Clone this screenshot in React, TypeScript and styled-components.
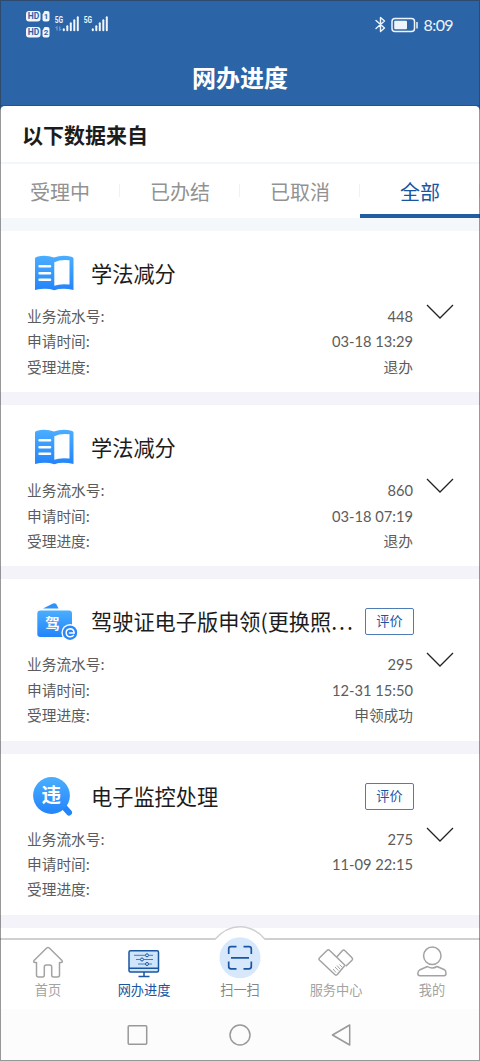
import React from 'react';
import styled, { createGlobalStyle } from 'styled-components';

const cjk = `'Noto Sans CJK SC', sans-serif`;
const blue = '#1a559f';
const grey = '#a3a3a3';

const Global = createGlobalStyle`
  * { box-sizing: border-box; }
  body { margin: 0; font-family: ${cjk}; }
  svg { display: block; }
`;

const Screen = styled.div`
  position: relative;
  display: flex;
  flex-direction: column;
  width: 480px;
  height: 1061px;
  overflow: hidden;
  background: #2b65a8;
  &::after {
    content: '';
    position: absolute;
    inset: 0;
    border: 1px solid rgba(50, 50, 50, 0.5);
    pointer-events: none;
    z-index: 5;
  }
`;

const StatusBar = styled.div`
  display: flex;
  justify-content: space-between;
  height: 48px;
  padding: 8px 27px 0 26px;
`;

const StatusRight = styled.div`
  display: flex;
  align-items: center;
  height: 33px;
  gap: 5px;
  color: #eef4fb;
  font: 400 16px/33px Lato, ${cjk};
  letter-spacing: -0.6px;
`;

const Title = styled.h1`
  margin: 0;
  height: 58px;
  padding-top: 11px;
  border-bottom: 1px solid #1d549b;
  color: #fff;
  font-size: 24px;
  font-weight: 700;
  line-height: 36px;
  text-align: center;
`;

const Source = styled.div`
  height: 58px;
  flex: none;
  padding-left: 22px;
  border-radius: 5px 5px 0 0;
  border-bottom: 2px solid #f2f7f9;
  background: #fff;
  color: #1c1c1c;
  font-size: 21px;
  font-weight: 700;
  line-height: 57px;
`;

const Tabs = styled.div`
  display: grid;
  grid-template-columns: repeat(4, 120px);
  height: 54px;
  flex: none;
  background: #fff;
`;

const Tab = styled.div<{ $active?: boolean }>`
  display: flex;
  align-items: center;
  justify-content: center;
  height: 54px;
  padding-top: 4px;
  font-size: 20px;
  color: ${p => (p.$active ? blue : '#929292')};
  border-bottom: 4px solid ${p => (p.$active ? '#225ca3' : 'transparent')};
  background: linear-gradient(#f1f1f3, #f1f1f3) right 20px / 1px 13px no-repeat;
`;

const List = styled.main`
  flex: 1;
  min-height: 0;
  overflow: hidden;
  display: flex;
  flex-direction: column;
  gap: 13px;
  padding-top: 13px;
  background: linear-gradient(#f4f8fb 13px, #f3f3f9 13px);
`;

const Card = styled.section`
  display: grid;
  grid-template-columns: 386px 1fr;
  flex: none;
  height: 161.2px;
  padding: 19px 26px 0 27px;
  background: #fff;
`;

const CardHead = styled.div`
  display: flex;
  align-items: center;
  height: 46px;
`;

const IconSlot = styled.div`
  width: 64px;
  flex: none;
`;

const CardTitle = styled.h2`
  flex: 1;
  margin: 0;
  white-space: nowrap;
  color: #1c1c1c;
  font-size: 21.2px;
  font-weight: 400;
  line-height: 32px;
`;

const Dots = styled.span`
  letter-spacing: 2px;
`;

const RateButton = styled.button`
  width: 49px;
  height: 27px;
  margin: 1px -1px 0 0;
  padding: 0 0 1px;
  border: 1px solid #4d7db6;
  border-radius: 2px;
  background: #fff;
  color: ${blue};
  font: 400 13.2px/24px ${cjk};
`;

const Row = styled.div`
  display: flex;
  justify-content: space-between;
  height: 25.4px;
  color: #5c5c5c;
  font-size: 14.7px;
  line-height: 25.4px;
`;

const Rows = styled.div`
  margin-top: 7px;
`;

const Value = styled.span`
  padding-top: 1px;
  font-family: Lato, ${cjk};
`;

const Expand = styled.div`
  padding: 54px 0 0 13px;
`;

const NavBar = styled.nav`
  position: relative;
  display: grid;
  grid-template-columns: repeat(5, 96px);
  flex: none;
  height: 71px;
  border-top: 2px solid #d0d0d0;
  background: #fff;
`;

const Bump = styled.svg`
  position: absolute;
  left: 210px;
  top: -15px;
`;

const NavItem = styled.div<{ $color: string }>`
  position: relative;
  display: flex;
  flex-direction: column;
  align-items: center;
  color: ${p => p.$color};
  font-size: 13.2px;
  line-height: 20px;
`;

const NavIcon = styled.div`
  display: flex;
  align-items: center;
  justify-content: center;
  height: 40px;
  padding-top: 4px;
`;

const SystemBar = styled.div`
  display: flex;
  justify-content: center;
  gap: 80px;
  flex: none;
  height: 52px;
  padding-top: 15px;
  background: #fcfcfc;
`;

const Signals = () => (
  <svg width="90" height="34" viewBox="26 8 90 34" fill="#f2f6fb">
    {[11, 27].map((y, i) => (
      <g key={y}>
        <rect x="26" y={y} width="14.500" height="10.500" rx="3" />
        <path d={`M44.500 ${y}h3q2 0 2 2v6.500q0 2-2 2h-3q-2 0-2-2v-5z`} />
        <text x="27.700" y={y + 8.400} fontFamily="Roboto" fontWeight="700" fontSize="8.500" fill="#2b65a8">HD</text>
        <text x="43.800" y={y + 8.400} fontFamily="Roboto" fontWeight="700" fontSize="8" fill="#2b65a8">{i + 1}</text>
      </g>
    ))}
    {[0, 29].map(x => (
      <g key={x}>
        <text transform={`translate(${54.800 + x} 23) scale(0.75 1)`} fontFamily="Roboto" fontWeight="700" fontSize="8.800">5G</text>
        {[3, 6, 9, 12, 15].map((h, i) => (
          <rect key={h} x={62.800 + x + i * 3.500} y={31.200 - h} width="2" height={h} rx="1" />
        ))}
      </g>
    ))}
    <path d="M57 26.500v4M55.500 28l1.500-1.500M59.800 26.500v4M61.200 29l-1.400 1.500" stroke="#86a9d2" fill="none" />
  </svg>
);

const Bluetooth = () => (
  <svg width="11" height="17" viewBox="0 0 11 17" fill="none" stroke="#eef4fb" strokeWidth="1.400" strokeLinejoin="round" strokeLinecap="round">
    <path d="M1 4.500 9.500 12 5.500 15.500V1.500L9.500 5 1 12.500" />
  </svg>
);

const Battery = () => (
  <svg width="28" height="16" viewBox="0 0 28 16" fill="none">
    <rect x="1" y="1.500" width="22.500" height="13" rx="3" stroke="#eef4fb" strokeWidth="1.500" />
    <rect x="3.200" y="3.800" width="12.800" height="8.500" rx="1" fill="#eef4fb" />
    <path d="M26 5v6.500" stroke="#eef4fb" strokeWidth="1.500" />
  </svg>
);

const Gradient = ({ id }: { id: string }) => (
  <defs>
    <linearGradient id={id} x1="0" y1="0" x2="0" y2="1">
      <stop offset="0" stopColor="#4aaeff" />
      <stop offset="1" stopColor="#2484fa" />
    </linearGradient>
  </defs>
);

const BookIcon = ({ id }: { id: string }) => (
  <svg width="54" height="46" viewBox="27 250 54 46">
    <Gradient id={id} />
    <path d="M35 258.500Q35 257.200 37 256.700Q46 254.600 54 257.600Q62 254.600 71.500 256.700Q73.500 257.200 73.500 258.500V290Q62 287.500 54.300 290.300Q46 287.500 35 290Z" fill={`url(#${id})`} />
    <path d="M54.300 262.200Q60 259.500 69.500 260.300V284.600Q60 283.500 54.300 285.800Z" fill="#fff" />
    <path d="M39.600 266.300H50M39.600 273.200H50M39.600 279.700H50" stroke="#fff" strokeWidth="2.600" strokeLinecap="round" />
  </svg>
);

const WalletIcon = () => (
  <svg width="54" height="46" viewBox="27 598 54 46">
    <Gradient id="wallet" />
    <path d="M43 608.500 52.500 603.700Q55 602.500 56.500 604.500L58.500 608.500Z" fill="#2e92fc" />
    <rect x="37.300" y="610.500" width="34.700" height="26.500" rx="3" fill="url(#wallet)" />
    <text x="45.200" y="628.800" fontFamily={cjk} fontWeight="700" fontSize="14.500" fill="#fff">驾</text>
    <circle cx="70" cy="632.700" r="8.600" fill="#fff" />
    <circle cx="70" cy="632.700" r="7.200" fill="#2988f9" />
    <path d="M69.500 633H74.200Q73.800 628.800 70.200 628.800Q66.200 629 66.200 633Q66.500 636.700 70.200 636.800Q72.500 636.700 73.500 635.400" fill="none" stroke="#fff" strokeWidth="1.500" strokeLinecap="round" />
  </svg>
);

const SearchIcon = () => (
  <svg width="54" height="46" viewBox="27 772 54 46">
    <Gradient id="search" />
    <path d="M64.500 806.500 69 811.500" stroke="#2484fa" strokeWidth="6" strokeLinecap="round" />
    <circle cx="51.500" cy="794.500" r="18.400" fill="url(#search)" />
    <text x="41.500" y="801.200" fontFamily={cjk} fontWeight="700" fontSize="19.500" fill="#fff">违</text>
  </svg>
);

const HomeIcon = () => (
  <svg width="34" height="34" viewBox="0 0 34 34" fill="none" stroke={grey} strokeWidth="1.500" strokeLinejoin="round">
    <path d="M15.700 3Q17 2 18.300 3L31 15.500Q32 17.300 30 17.500H28.500V30Q28.500 32 26.500 32H22.500Q20.700 32 20.700 30V22Q20.700 20 18.700 20H15.300Q13.300 20 13.300 22V30Q13.300 32 11.500 32H7.500Q5.500 32 5.500 30V17.500H4Q2 17.300 3 15.500Z" />
  </svg>
);

const MonitorIcon = () => (
  <svg width="34" height="34" viewBox="127 946 34 34" fill="none" stroke={blue}>
    <rect x="129" y="951.700" width="29.500" height="21.300" rx="1.500" fill="#cfe5fb" strokeWidth="1.500" />
    <path d="M129 969.200H158.500M144 973v4.500M138.500 977.500h11" strokeWidth="1.500" />
    <path d="M134 956.300h11M149 956.300h4M136 960.500h4M144 960.500h9M138 965h7M149 965h3" stroke="#477bb6" strokeWidth="1" />
    <g strokeWidth="1"><circle cx="147" cy="956.300" r="1.500" /><circle cx="142" cy="960.500" r="1.500" /><circle cx="147" cy="965" r="1.500" /></g>
  </svg>
);

const HandsIcon = () => (
  <svg width="38" height="34" viewBox="317 946 38 34" fill="none" stroke={grey} strokeWidth="1.500" strokeLinejoin="round">
    <path d="M327 951.500Q328.300 950 329.700 951.500L345 966.200 337.500 975.300Q336 977 334.500 975.300L319.600 961.300Q318.300 960 319.600 958.800Z" />
    <path d="M336.700 958 342.300 951.700Q343.700 950.300 345 951.700L352 958.700Q353.200 960 352 961.300L345.800 967.300" />
    <path d="M333 970l3 3.500M335 968l3.300 3.500M337 966.500l3 3.500M339.500 965.500l2.500 2.500" strokeWidth="1" />
  </svg>
);

const PersonIcon = () => (
  <svg width="34" height="34" viewBox="415 946 34 34" fill="none" stroke={grey} strokeWidth="1.500" strokeLinejoin="round">
    <circle cx="432.300" cy="956.800" r="8.700" />
    <path d="M427.500 967.500Q432 970.700 437 967.500L444.500 970.700Q446 971.700 446 974.500Q446 976.700 444 976.700H420Q417.800 976.700 417.800 974.500Q418 971.700 420 970.700Z" />
  </svg>
);

const ScanBump = () => (
  <Bump width="60" height="58" viewBox="210 925 60 58" fill="none">
    <path d="M214.500 941V938.700Q226 926.500 240 926.500T265.500 938.700V941Z" fill="#fff" />
    <path d="M212 939.200H215Q226 926.700 240 926.700T265 939.200H268" stroke="#d0d0d0" strokeWidth="1.500" />
    <circle cx="240" cy="957.700" r="20.500" fill="#d7e8fc" />
    <path d="M236.500 946.700H231Q228.700 946.700 228.700 949V954M243.500 946.700H249Q251.300 946.700 251.300 949V954M228.700 961.500V966.500Q228.700 968.800 231 968.800H236.500M251.300 961.500V966.500Q251.300 968.800 249 968.800H243.500M231 957.900H249" stroke={blue} strokeWidth="1.700" />
  </Bump>
);

type Item = { icon: React.ReactNode; title: string; cut?: boolean; rate?: boolean; values: string[] };

const items: Item[] = [
  { icon: <BookIcon id="book1" />, title: '学法减分', values: ['448', '03-18 13:29', '退办'] },
  { icon: <BookIcon id="book2" />, title: '学法减分', values: ['860', '03-18 07:19', '退办'] },
  { icon: <WalletIcon />, title: '驾驶证电子版申领(更换照', cut: true, rate: true, values: ['295', '12-31 15:50', '申领成功'] },
  { icon: <SearchIcon />, title: '电子监控处理', rate: true, values: ['275', '11-09 22:15', ''] },
];

const labels = ['业务流水号:', '申请时间:', '受理进度:'];

export default function App() {
  return (
    <Screen>
      <Global />
      <StatusBar>
        <Signals />
        <StatusRight><Bluetooth /><Battery /><span>8:09</span></StatusRight>
      </StatusBar>
      <Title>网办进度</Title>
      <Source>以下数据来自</Source>
      <Tabs>
        <Tab>受理中</Tab><Tab>已办结</Tab><Tab>已取消</Tab><Tab $active>全部</Tab>
      </Tabs>
      <List>
        {items.map((item, n) => (
          <Card key={n}>
            <div>
              <CardHead>
                <IconSlot>{item.icon}</IconSlot>
                <CardTitle>{item.title}{item.cut && <Dots>...</Dots>}</CardTitle>
                {item.rate && <RateButton>评价</RateButton>}
              </CardHead>
              <Rows>
                {labels.map((label, i) => (
                  <Row key={label}><span>{label}</span><Value>{item.values[i]}</Value></Row>
                ))}
              </Rows>
            </div>
            <Expand>
              <svg width="28" height="16" viewBox="0 0 28 16" fill="none" stroke="#222" strokeWidth="1.300">
                <path d="M1 1 14 14 27 1" />
              </svg>
            </Expand>
          </Card>
        ))}
        <Card />
      </List>
      <NavBar>
        <ScanBump />
        <NavItem $color={grey}><NavIcon><HomeIcon /></NavIcon>首页</NavItem>
        <NavItem $color={blue}><NavIcon><MonitorIcon /></NavIcon>网办进度</NavItem>
        <NavItem $color="#858585"><NavIcon />扫一扫</NavItem>
        <NavItem $color={grey}><NavIcon><HandsIcon /></NavIcon>服务中心</NavItem>
        <NavItem $color={grey}><NavIcon><PersonIcon /></NavIcon>我的</NavItem>
      </NavBar>
      <SystemBar>
        <svg width="22" height="22" viewBox="0 0 22 22" fill="none" stroke="#999" strokeWidth="1.500"><rect x="1.200" y="1.800" width="18.500" height="18.500" rx="1" /></svg>
        <svg width="22" height="22" viewBox="0 0 22 22" fill="none" stroke="#999" strokeWidth="1.500"><circle cx="11" cy="11" r="10" /></svg>
        <svg width="22" height="22" viewBox="0 0 22 22" fill="none" stroke="#999" strokeWidth="1.500" strokeLinejoin="round"><path d="M1.500 11 18.700 1V21Z" /></svg>
      </SystemBar>
    </Screen>
  );
}
